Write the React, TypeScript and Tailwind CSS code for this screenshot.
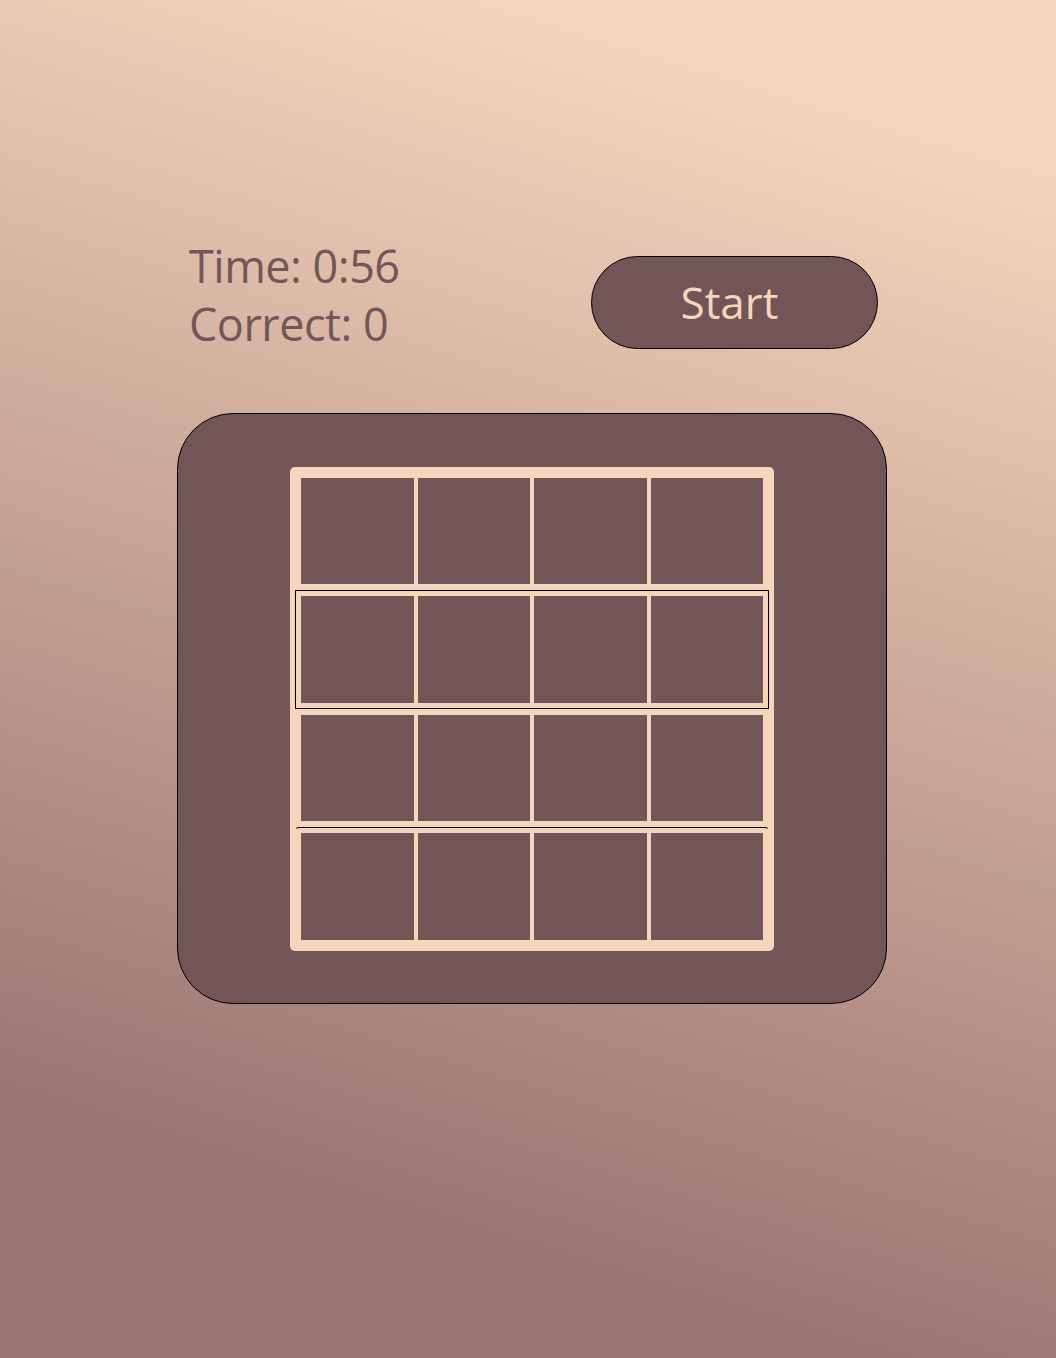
const rows = [0, 1, 2, 3];
const cols = [0, 1, 2, 3];

// row outline styles: the 2nd row is outlined, the 4th only shows a top rule
const rowBorder = [
  "border-transparent",
  "border-black",
  "border-transparent",
  "border-transparent border-t-black rounded-[4px]",
];

const App = () => {
  return (
    <div className="min-h-screen w-full bg-[linear-gradient(197deg,#f5d6bd_10%,#9b7472_85%)] font-['Open_Sans','Noto_Sans',sans-serif]">
      <div className="w-[710px] ml-[177px] pt-[237px]">
        {/* header: stats + start button */}
        <div className="flex items-start justify-between pl-[12px] pr-[9px]">
          <div className="text-[45px] leading-[58px] text-[#735658] tracking-[-0.5px]">
            <div>Time: 0:56</div>
            <div>Correct: 0</div>
          </div>
          <button className="mt-[19px] w-[287px] h-[93px] rounded-full border border-black bg-[#725557] text-[#f5d6bd] text-[44px] leading-none flex items-center justify-center pb-[2px] pr-[10px]">
            Start
          </button>
        </div>

        {/* board */}
        <div className="mt-[60px] w-[710px] h-[591px] rounded-[56px] border border-black bg-[#725557] flex items-center justify-center">
          <div className="w-[484px] h-[484px] rounded-[5px] bg-[#f5d6bd] p-[5px] flex flex-col">
            {rows.map((r) => (
              <div key={r} className={`flex-1 flex gap-[4px] border p-[5px] ${rowBorder[r]}`}>
                {cols.map((c) => (
                  <div key={c} className="flex-1 bg-[#725557]" />
                ))}
              </div>
            ))}
          </div>
        </div>
      </div>
    </div>
  );
};

export default App;
